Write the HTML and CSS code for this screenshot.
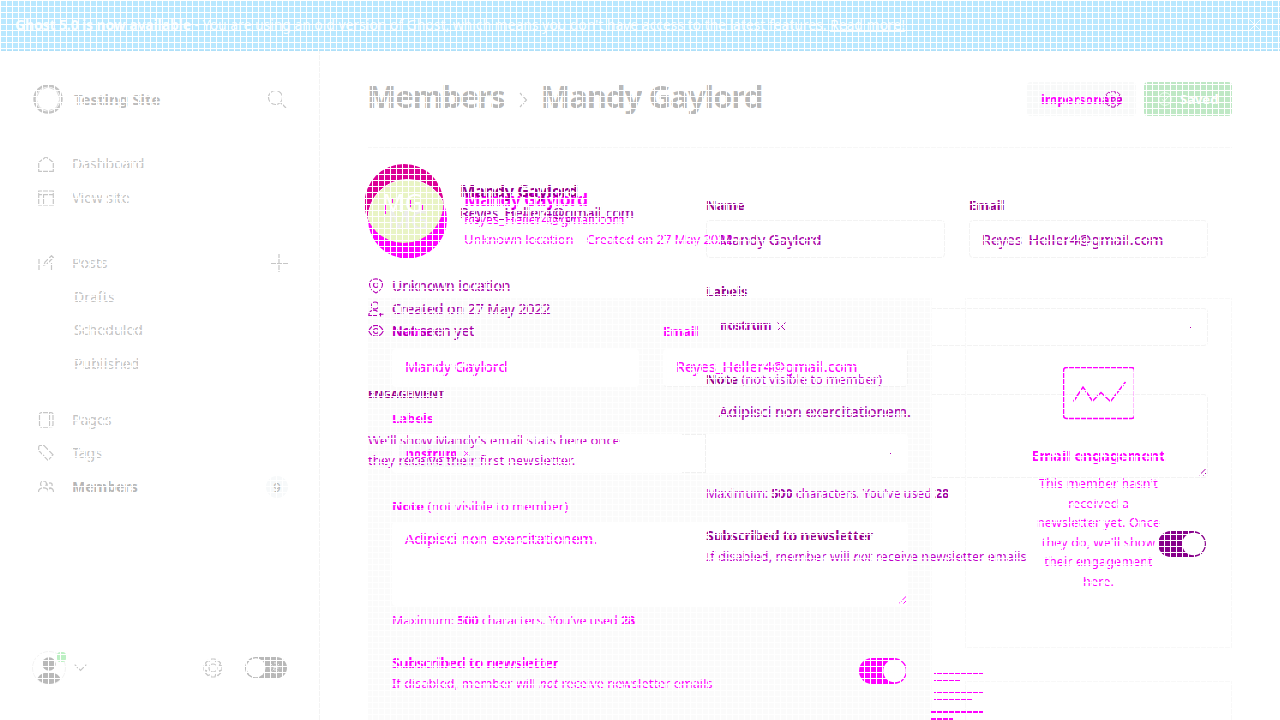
FILE: index.html
```html
<!DOCTYPE html>
<html lang="en">
<head>
<meta charset="utf-8">
<title>Members - Mandy Gaylord</title>
<link rel="stylesheet" href="styles.css">
</head>
<body>
<div class="app">
<header class="banner"><p><b>Ghost 5.0 is now available</b> - You are using an old version of Ghost, which means you don't have access to the latest features. <u>Read more!</u></p>
<svg width="12" height="12" viewBox="0 0 12 12"><path d="M.5.5l11 11M11.5.5l-11 11"/></svg></header>
<div class="body">
<aside class="side">
<div class="site"><svg width="30" height="30" viewBox="0 0 30 30"><circle cx="15" cy="15" r="13.500" fill="none" stroke="#c4c4c4" stroke-width="2.400"/><path d="M15 3l8.500 3.500L27 15l-3.500 8.500L15 27l-8.500-3.500L3 15l3.500-8.500z" stroke="#dcdcdc"/></svg><b>Testing Site</b>
<svg class="ico search" width="20" height="20" viewBox="0 0 20 20"><circle cx="8.500" cy="8.500" r="7"/><path d="M13.500 13.500l5.500 5.500"/></svg></div>
<nav>
<a class="item"><svg class="ico" width="16" height="16" viewBox="0 0 16 16"><path d="M.7 6.500v8.800h14.600V6.500M.7 6.500L8 .7l7.300 5.800"/></svg><span>Dashboard</span></a>
<a class="item"><svg class="ico" width="16" height="16" viewBox="0 0 16 16"><path d="M.7 1h14.600v14H.7zM.7 4.700h14.600M5.500 4.700V15"/></svg><span>View site</span></a>
<a class="item posts"><svg class="ico" width="16" height="16" viewBox="0 0 16 16"><path d="M5 3.500H1v12h12.500V8M6 10l1-3L13.500.700l1.800 1.800L9 9z"/></svg><span>Posts</span><svg class="ico plus" width="18" height="18" viewBox="0 0 18 18"><path d="M9 0v18M0 9.500h18"/></svg></a>
<a class="item sub"><span>Drafts</span></a>
<a class="item sub"><span>Scheduled</span></a>
<a class="item sub"><span>Published</span></a>
<a class="item pages"><svg class="ico" width="16" height="16" viewBox="0 0 16 16"><rect x="1.500" y=".7" width="10" height="14.500" rx="2"/><path d="M11 .7h2a2 2 0 0 1 2 2v10a2 2 0 0 1-2 2h-2"/></svg><span>Pages</span></a>
<a class="item"><svg class="ico" width="16" height="16" viewBox="0 0 16 16"><path d="M.7 5.500V2a1.500 1.500 0 0 1 1.500-1.500H6l9 9.300L10 15.300z"/></svg><span>Tags</span></a>
<a class="item on"><svg class="ico" width="16" height="16" viewBox="0 0 16 16"><circle cx="5.500" cy="5" r="3"/><circle cx="12" cy="6" r="2.200"/><path d="M.5 13c0-5.500 10-5.500 10 0M10.500 10c2.500-1.500 5-.5 5 3"/></svg><span>Members</span><em>9</em></a>
</nav>
<footer>
<svg width="36" height="36" viewBox="0 0 36 36"><circle cx="17" cy="18" r="16.500" fill="none" stroke="#f3f3f3"/><circle cx="17" cy="14" r="6.700" fill="#b9b9b9"/><path d="M5.500 29c1.500-5 6-6.500 11.500-6.500S27 24 28.500 29c-3 3.500-7 5-11.500 5s-8.500-1.500-11.500-5z" fill="#b9b9b9"/><rect x="25" y="2" width="9" height="10" rx="3.500" fill="#bdf0c4"/></svg>
<svg class="ico chev" width="13" height="8" viewBox="0 0 13 8"><path d="M.7.7l5.800 5.800L12.300.7"/></svg>
<svg class="ico gear" width="20" height="20" viewBox="0 0 20 20"><circle cx="10" cy="10" r="4"/><path d="M8 1h4l.6 2.500 2.400-1L17.500 5 16.500 7.400 19 8v4l-2.500.6 1 2.400-2.500 2.500-2.400-1L12 19H8l-.6-2.500-2.400 1L2.500 15l1-2.400L1 12V8l2.500-.6-1-2.400L5 2.500l2.400 1z"/></svg>
<svg width="42" height="22" viewBox="0 0 42 22"><rect width="42" height="21.500" rx="10.700" fill="#b9b9b9"/><circle cx="11" cy="10.700" r="9.500" fill="#fff"/><path d="M30 5v12M24.500 11h11M26 7l8 8M34 7l-8 8" stroke="#eee" stroke-dasharray="2 1.500"/></svg>
</footer>
</aside>
<main>
<div class="head"><h1>Members</h1><svg class="ico crumb" width="9" height="16" viewBox="0 0 9 16"><path d="M1 1l6.500 7L1 15"/></svg><h1 class="who">Mandy Gaylord</h1>
<div class="btn imp"><span>impersonate</span><svg class="cog" width="18" height="18" viewBox="0 0 20 20"><circle cx="10" cy="10" r="2.500"/><path d="M8 1h4l.6 2.500 2.400-1L17.500 5 16.500 7.400 19 8v4l-2.500.6 1 2.400-2.500 2.500-2.400-1L12 19H8l-.6-2.500-2.400 1L2.500 15l1-2.400L1 12V8l2.500-.6-1-2.400L5 2.500l2.400 1z"/></svg></div>
<div class="btn saved"><svg width="14" height="14" viewBox="0 0 14 14"><circle cx="7" cy="7" r="6.300"/><path d="M3.800 7.200l2.300 2.200 4.200-4.900"/></svg><b>Saved</b></div></div>
<div class="stack">

<section class="old">
<div class="left">
<div class="profile"><svg width="84" height="96" viewBox="0 0 84 96">
<defs><clipPath id="top"><circle cx="39" cy="39.500" r="39.500"/></clipPath></defs>
<circle cx="42.500" cy="55" r="39.500" fill="#f0f"/><circle cx="39" cy="39.500" r="39.500" fill="#dc0096"/>
<g clip-path="url(#top)"><circle cx="42.500" cy="55" r="39.500" fill="#e9f4c5" stroke="#fff"/></g>
<text class="mg" x="23" y="65" fill="#ececec">MG</text><text class="mg" x="17" y="48" fill="#fff">MG</text>
<path d="M20.500 40v10M27.500 35v4M45.500 36v7M57.500 40v6" stroke="#f0f"/></svg>
<div class="id"><b class="nm">Mandy Gaylord</b><span class="em">Reyes_Heller4@gmail.com</span></div></div>
<ul>
<li><svg width="16" height="16" viewBox="0 0 16 16"><path d="M8 15C5 13.500 1.500 10 1.500 6.500 1.500-1 14.500-1 14.500 6.500 14.500 10 11 13.500 8 15z"/><circle cx="8" cy="7" r="2.500"/></svg><span>Unknown location</span></li>
<li><svg width="16" height="16" viewBox="0 0 16 16"><circle cx="7" cy="4.500" r="3.500"/><path d="M9 14.500H.8C1 9 6 8 9.500 10.500M12.500 11v4.500M10.500 13.300h5"/></svg><span>Created on 27 May 2022</span></li>
<li><svg width="16" height="16" viewBox="0 0 16 16"><path d="M.8 8C4 .5 12 .5 15.200 8 12 15 4 15 .8 8z"/><circle cx="8" cy="8" r="2.500"/></svg><span>Not seen yet</span></li>
</ul>
<h4>ENGAGEMENT</h4>
<p class="stats">We'll show Mandy's email stats here once<br><span class="s2">they receive their first newsletter.</span></p>
</div>
<div class="form">
<div class="two"><div><label>Name</label><div class="input"><span>Mandy Gaylord</span></div></div><div><label>Email</label><div class="input"><span class="mail">Reyes_Heller4@gmail.com</span></div></div></div>
<label class="m23">Labels</label><div class="input labels"><span class="tag">nostrum</span><svg class="x" width="9" height="9" viewBox="0 0 9 9"><path d="M.5.5l8 8M8.500.5l-8 8"/></svg><i class="dot"></i></div>
<label class="m23"><span>Note</span> <span class="n2">(not visible to member)</span></label><div class="input area"><span>Adipisci non exercitationem.</span><svg class="grip" width="8" height="8"><path d="M0 7.500L7.500 0M4.500 7.500l3-3"/></svg></div>
<p class="max">Maximum: <b>500</b> characters. You've used <b>28</b></p>
<div class="sw"><div><b class="sub1">Subscribed to newsletter</b><p class="if">If disabled, member will <i>not</i> receive newsletter emails</p></div>
<svg class="tog" width="48" height="26" viewBox="0 0 48 26"><rect width="48" height="26" rx="13"/><circle cx="35.500" cy="13" r="11.300" fill="#fff"/></svg></div>
</div>
</section>

<section class="new">
<div class="id"><b class="nm">Mandy Gaylord</b><span class="em">Reyes_Heller4@gmail.com</span><span class="loc">Unknown location – Created on 27 May 2022</span></div>
<div class="cols">
<div class="form panel">
<div class="two"><div><label>Name</label><div class="input"><span>Mandy Gaylord</span></div></div><div><label>Email</label><div class="input edge"><span class="mail">Reyes_Heller4@gmail.com</span></div></div></div>
<label class="lb">Labels</label><div class="input labels"><div class="chip"><span class="tag">nostrum</span><svg class="x" width="7" height="7" viewBox="0 0 9 9"><path d="M.5.5l8 8M8.500.5l-8 8"/></svg></div><i class="tail"></i><i class="dot"></i></div>
<label class="lb2"><span>Note</span> <span class="n2">(not visible to member)</span></label><div class="input area"><span>Adipisci non exercitationem.</span><svg class="grip" width="8" height="8"><path d="M0 7.500L7.500 0M4.500 7.500l3-3"/></svg></div>
<p class="max">Maximum: <b>500</b> characters. You've used <b>28</b></p>
<div class="sw"><div><b class="sub1">Subscribed to newsletter</b><p class="if">If disabled, member will <i>not</i> receive newsletter emails</p></div>
<svg class="tog" width="48" height="26" viewBox="0 0 48 26"><rect width="48" height="26" rx="13"/><circle cx="35.500" cy="13" r="11.300" fill="#fff"/></svg></div>
</div>
<div class="rail">
<div class="card"><svg width="72" height="54" viewBox="0 0 72 54"><rect x=".5" y="1.500" width="71" height="51" rx="3"/><path d="M10.500 35.500L20 21l9.500 14 8.500-8.500 9.500 9L62.500 16"/></svg>
<b>Email engagement</b><p>This member hasn't<br>received a<br>newsletter yet. Once<br>they do, we'll show<br>their engagement<br>here.</p></div>
<div class="card next"></div>
</div>
</div>
<div class="lines"><i style="width:49px"></i><i style="width:27px"></i><i style="width:49px"></i><i style="width:38px"></i><i class="w" style="width:52px"></i><i class="w" style="width:22px"></i></div>
</section>
</div>
</main>
</div>
<div class="mesh"></div>
</div>
</body>
</html>
```
FILE: styles.css
```css
*{box-sizing:border-box;margin:0;padding:0}
body{font-family:"Noto Sans","Open Sans",sans-serif;font-size:14px;line-height:20px;color:#c3c3c3;background:#fff}
svg{fill:none;display:block;flex:none}
ul{list-style:none}
span,b,label,p,h4{white-space:nowrap}
.app{position:relative;width:1280px;height:720px;overflow:hidden}
.mesh{position:absolute;inset:0;z-index:5;background:repeating-linear-gradient(to right,#fff 0 1px,transparent 1px 6px),repeating-linear-gradient(to bottom,#fff 0 1px,transparent 1px 6px)}
.banner{height:51px;background:#b9e8ff;border-bottom:1px solid #b0e0f8;padding:0 19px 0 15px;display:flex;align-items:center;justify-content:space-between;color:#f8fdff;letter-spacing:-.06px}
.banner b{letter-spacing:-.13px}
.banner svg{stroke:#f4fbff}
.body{display:flex;height:669px}
.side{width:320px;border-right:1px solid #f3f3f3;display:flex;flex-direction:column;padding:33px 32px 0 33px}
.site{display:flex;align-items:center;height:30px;gap:11px;font-size:15px;color:#bbb}
.site b{margin-top:-1px}
.ico{stroke:#c6c6c6;stroke-width:1.2}
.search{margin-left:auto}
nav{margin-top:40px;padding-left:5px}
.item{display:flex;align-items:center;height:20px;margin-bottom:14px;gap:18px}
.posts{margin-top:45px}
.plus{margin-left:auto;margin-right:-1px}
.sub{padding-left:36px;margin-bottom:13.400px;letter-spacing:.08px}
.pages{margin-top:36px;margin-bottom:13px}
.on{font-weight:bold;color:#b6b6b6}
.item em{margin-left:auto;margin-right:-1px;width:22px;height:22px;border-radius:50%;background:#f7f9fa;text-align:center;font:13px/22px "Noto Sans",sans-serif}
footer{display:flex;align-items:center;margin:auto 0 34px -1px;height:36px}
.chev{margin-left:6px}
.gear{margin-left:116px;margin-right:22px}
main{flex:1;padding:0 48px}
.head{height:97px;border-bottom:1px solid #f7f7f7;display:flex;align-items:center}
h1{font-size:31px;line-height:40px;color:#b9b9b9;white-space:nowrap;letter-spacing:-1.100px;margin:-7px 0 0 -1px}
.who{letter-spacing:-.9px}
.crumb{margin:1px 14px 0}
.btn{height:34px;border-radius:4px;display:flex;align-items:center}
.imp{margin-left:auto;width:109px;background:#f8f9f9;padding-left:14px;color:#f0f;font-weight:bold;font-size:13px;letter-spacing:-.1px;position:relative}
.cog{position:absolute;left:77px;top:8px;stroke:#b400b4;stroke-width:1.100}
.saved{margin-left:8px;width:88px;background:#bfe8c5;padding-left:14px;gap:8px;color:#fff;font-size:13px}
.saved svg{stroke:#f0fff2}
.stack{display:grid;height:572px;overflow:hidden;margin:0 -48px;padding:0 48px}
.stack>section{grid-area:1/1}
.old{display:grid;grid-template-columns:338px 502px;color:#a800a8;align-items:start}
.old .left,.old label,.old .input>*,.old p,.old b,.old .tog{position:relative;z-index:1}
.profile{display:flex;height:96px;margin:16px 0 0 -3px;gap:11px}
.mg{font-size:25px}
.id{display:flex;flex-direction:column}
.old .id{padding-top:17px}
.old .nm{font-size:16.500px;color:#96008c;height:22px;letter-spacing:-.5px}
.old .em{color:#a000a0;letter-spacing:.05px}
.old ul{margin-top:16px}
.old li{display:flex;gap:8px;height:22.500px;letter-spacing:-.03px}
.old .input span,.old li span,.old .em,.new .input span{-webkit-text-stroke:.2px currentColor}
.old li svg{stroke:#b400b4;stroke-width:1.1;margin-top:2px}
.old h4{font-size:11px;color:#96008c;margin-top:40px}
.stats{margin-top:26px;font-size:13px;color:#c800c8}
.s2{letter-spacing:.15px}
label{display:block;font-weight:bold;font-size:13px;height:20px}
.old label,.old .sub1{color:#96008c}
.n2{font-weight:normal;color:#c000c8;letter-spacing:-.05px}
.new .n2{color:#f0f}
.two{display:grid;grid-template-columns:239px 239px;gap:24px}
.input{height:38px;border:1px solid #f3f3f3;border-radius:4px;margin-top:5px;padding:8px 13px 8px 12px;display:flex;background:#fff;font-size:14.500px;letter-spacing:-.1px}
.input .mail{letter-spacing:.1px}
.old .form{padding-top:47px}
.m23{margin-top:23px}
.old .labels{margin-top:7px;padding:7px 16px 7px 13px}
.input .tag{font-weight:bold;font-size:12px;letter-spacing:0}
.x{margin:6px 0 0 6px;stroke:currentColor}
.dot{margin-left:auto;align-self:center;width:1px;height:1px;background:#b400b4}
.form .area{height:84px;padding-top:6px;letter-spacing:0}
.grip{margin:auto -13px -7px auto;stroke:currentColor}
.max,.if{font-size:12.500px}
.max{margin-top:6px;letter-spacing:-.07px}
.if{letter-spacing:.12px}
.old .max,.old .if{color:#c000c8}
.old .max b{color:#a000a0}
.sw{display:flex;justify-content:space-between;margin-top:22px}
.old .sw .tog{margin:5px 2px 0 0;fill:#87008a}
.sw .sub1{display:block;height:21px;letter-spacing:-.3px}
.new{color:#f0f}
.new>.id{padding:41px 0 0 96px;height:150px}
.new .nm{font-size:17.500px;height:20px;letter-spacing:-.65px}
.new .em{font-size:13px}
.new .loc{font-size:13px;letter-spacing:-.06px}
.cols{display:flex;gap:33px}
.panel{width:564px;height:422px;background:#fbfbfb;padding:23px 24px 0;position:relative}
.panel .two{grid-template-columns:247px 245px}
.panel .input{border-color:transparent;margin-top:8px;padding-top:6px}
.panel .edge{border-right-color:#f3f3f3;border-bottom-color:#f3f3f3}
.panel .lb{margin-top:21px}
.panel .labels{height:39px;margin-top:6px;padding:6px 16px 6px 6px}
.chip{display:flex;width:81px;height:26px;padding:3px 7px;background:#f7f7fa}
.tail{width:24px;height:39px;margin:-7px 0 0 202px;border:1px solid #f0f0f0;border-left:0}
.panel .lb2{margin-top:23px}
.panel .area{margin-top:6px;padding-top:5px}
.panel .max{margin-top:5px}
.panel .sw{margin-top:22px}
.panel .tog{margin:5px 1px 0 0;fill:#f0f}
.rail{width:267px}
.card{height:350px;border:1px solid #f8f8f8;display:flex;flex-direction:column;align-items:center;text-align:center;padding-top:67px}
.card svg{stroke:#f0f;stroke-width:1.500}
.card b{margin-top:26px;font-size:14px;letter-spacing:.2px}
.card p{font-size:12.500px;line-height:19.600px;margin-top:8px;letter-spacing:.15px}
.next{margin-top:33px}
.lines{position:absolute;z-index:2;left:934px;top:673px;display:grid;grid-template-rows:7px 12px 7px 12px 7px 2px}
.lines i{height:1px;background:#f0f}
.lines .w{height:2px;margin-left:-3px}
```
